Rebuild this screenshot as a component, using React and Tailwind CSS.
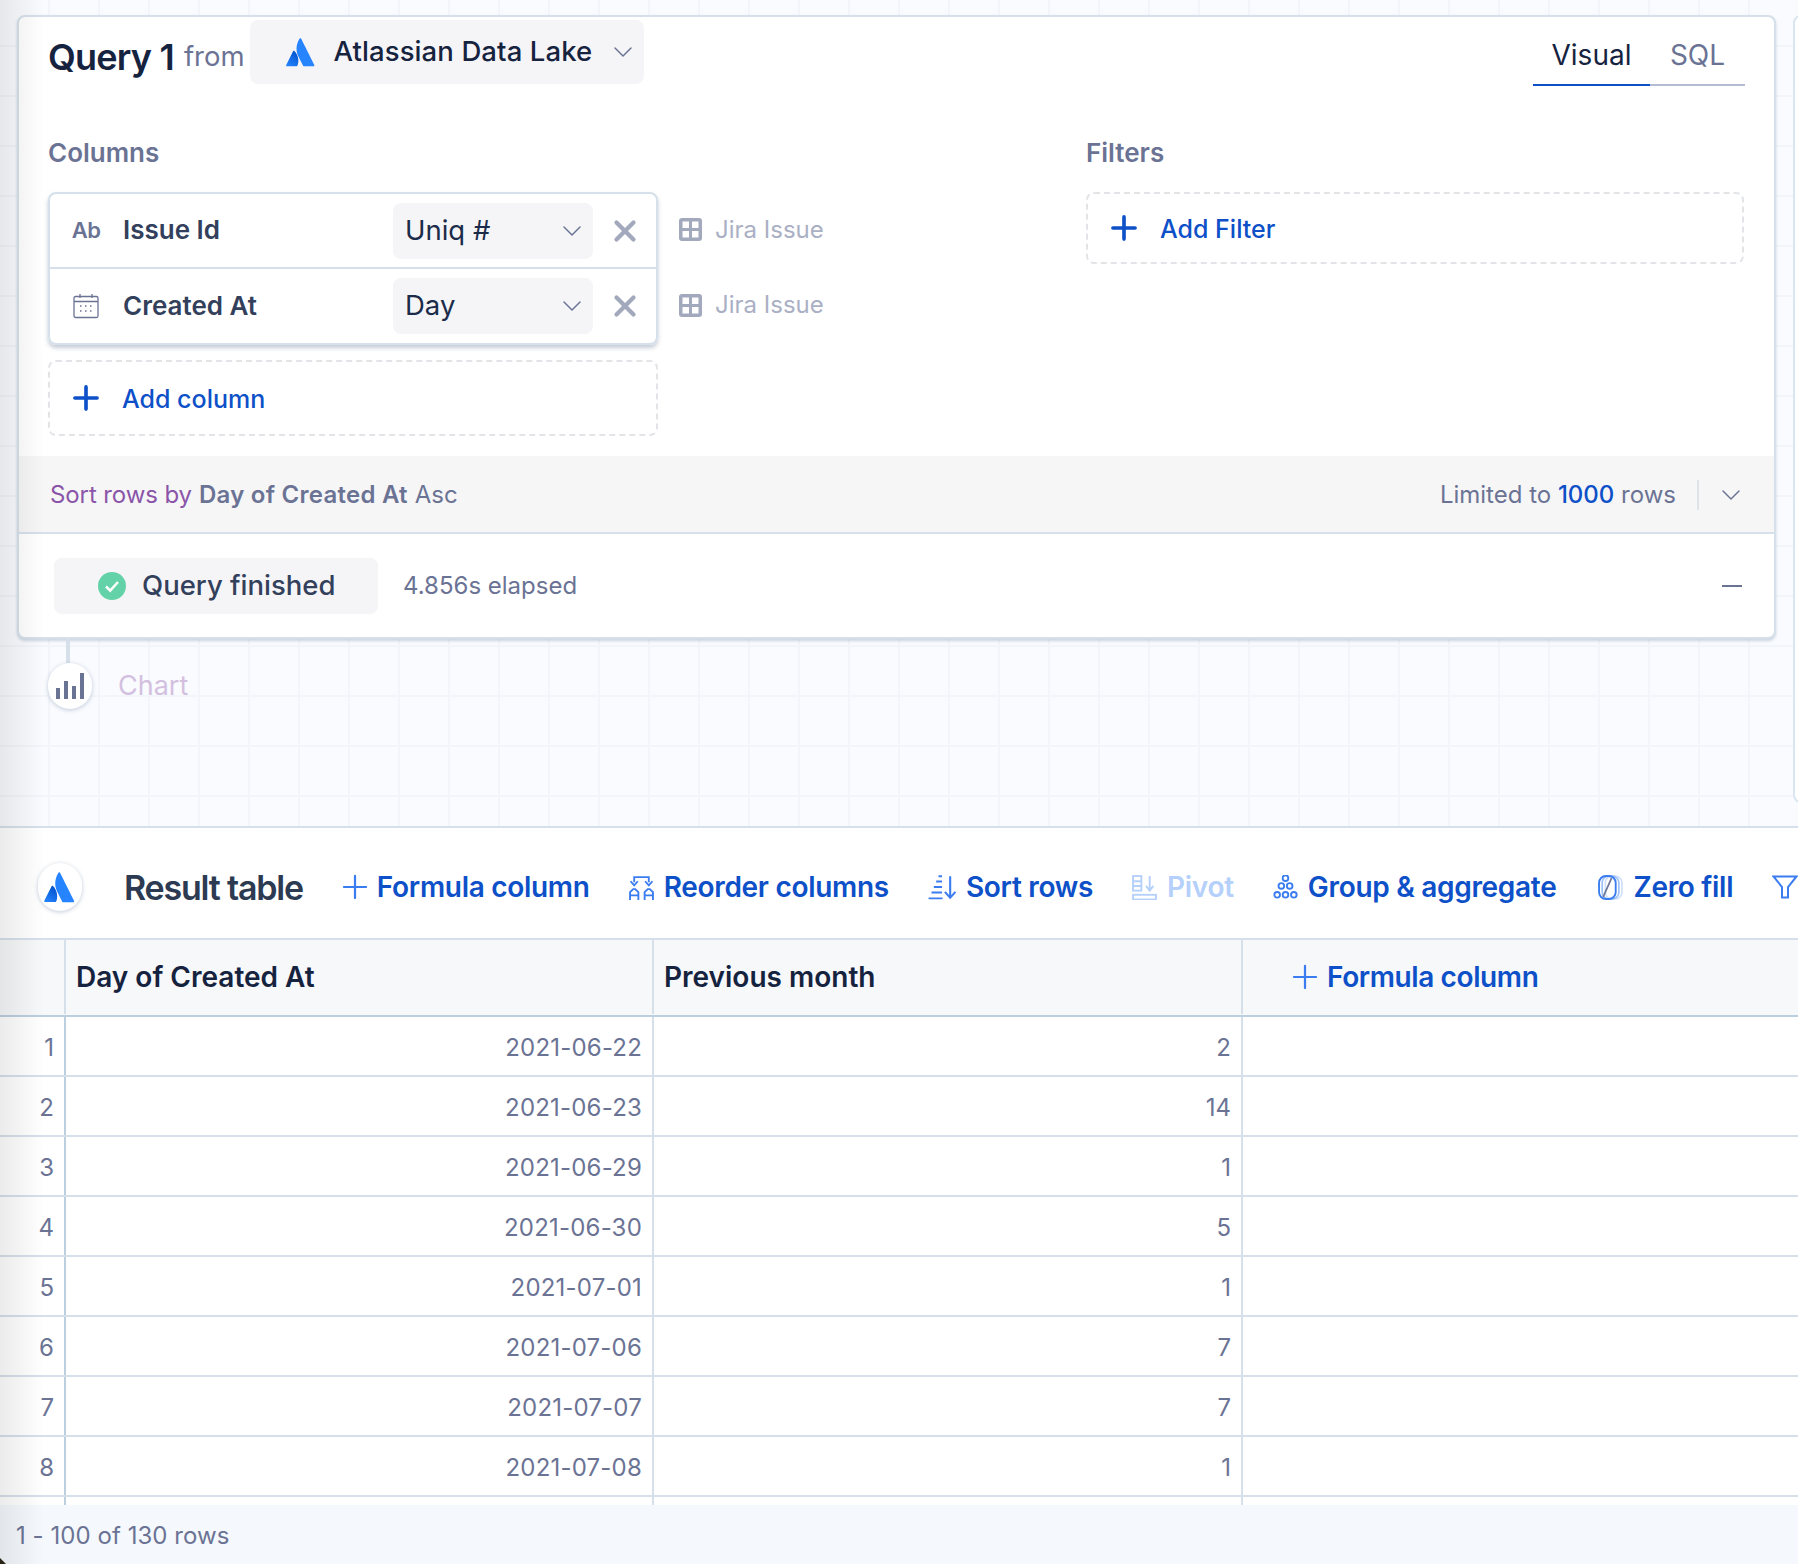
import { ChevronDown, X, Plus } from "lucide-react";

const rows = [
  ["2021-06-22", "2"],
  ["2021-06-23", "14"],
  ["2021-06-29", "1"],
  ["2021-06-30", "5"],
  ["2021-07-01", "1"],
  ["2021-07-06", "7"],
  ["2021-07-07", "7"],
  ["2021-07-08", "1"],
];

function AtlassianLogo({ className }) {
  return (
    <svg viewBox="0 0 32 32" className={className}>
      <defs>
        <linearGradient id="atl" x1="13" y1="17" x2="4" y2="31" gradientUnits="userSpaceOnUse">
          <stop offset="0" stopColor="#0052cc" />
          <stop offset="1" stopColor="#2684ff" />
        </linearGradient>
      </defs>
      <path fill="url(#atl)" d="M9.4 15.1c-.4-.5-1-.4-1.3.1L1.2 28.9c-.3.6.1 1.3.8 1.3h9.6c.3 0 .6-.2.8-.5 2.1-4.3.8-10.9-3-14.6z" />
      <path fill="#2684ff" d="M14.5 2.7c-3.9 6.1-3.6 12.9-1 18.1l4.6 9c.1.3.4.5.8.5h9.6c.7 0 1.1-.7.8-1.3 0 0-12.9-25.8-13.2-26.4-.3-.5-1-.6-1.6.1z" />
    </svg>
  );
}

function TableIcon() {
  return (
    <svg viewBox="0 0 23 23" className="w-[23px] h-[23px] shrink-0">
      <rect x="0" y="0" width="23" height="23" rx="3" fill="#a3a9bc" />
      <rect x="3.500" y="3.500" width="6.500" height="6.500" fill="#fff" />
      <rect x="13" y="3.500" width="6.500" height="6.500" fill="#fff" />
      <rect x="3.500" y="13" width="6.500" height="6.500" fill="#fff" />
      <rect x="13" y="13" width="6.500" height="6.500" fill="#fff" />
    </svg>
  );
}

function CalendarIcon() {
  return (
    <svg viewBox="0 0 26 26" className="w-[26px] h-[26px] shrink-0" fill="none" stroke="#6b7394" strokeWidth="1.3">
      <rect x="1" y="3.5" width="24" height="21" rx="1.5" />
      <path d="M1 8.5h24M7 1v4M19 1v4" />
      <path d="M7 13h1.5M12 13h1.5M17 13h1.5M7 18h1.5M12 18h1.5M17 18h1.5" strokeWidth="1.6" />
    </svg>
  );
}

function ReorderIcon() {
  return (
    <svg viewBox="0 0 24 24" className="w-[25px] h-[25px] shrink-0" fill="none" stroke="#3b7df0" strokeWidth="1.800">
      <path d="M5 7V2h14v5M1.500 6l3.500 4 3.500-4M15.500 6l3.500 4 3.500-4" />
      <path d="M1 24v-7.500l3-3h2l3 3V24M1 19.500h8M15 24v-7.500l3-3h2l3 3V24M15 19.500h8" />
    </svg>
  );
}

function SortIcon() {
  return (
    <svg viewBox="0 0 24 24" className="w-[28px] h-[26px] shrink-0" preserveAspectRatio="none" fill="none" stroke="#3b7df0" strokeWidth="1.800">
      <path d="M9 2h3M7 7h5M5 12h7M3 17h9M0.500 22.500h12" />
      <path d="M19 2v19M14.500 16.500L19 22l4.500-5.500" />
    </svg>
  );
}

function PivotIcon() {
  return (
    <svg viewBox="0 0 24 24" className="w-[25px] h-[25px] shrink-0" fill="none" stroke="#b5d0fa" strokeWidth="1.800">
      <rect x="1" y="1" width="8" height="14" />
      <path d="M1 6h8M1 10.500h8M17 1v13M13.500 10.500L17 15l3.500-4.500" />
      <rect x="1" y="19" width="22" height="4.500" />
    </svg>
  );
}

function GroupIcon() {
  const circles = [[12, 3], [8, 10.5], [16, 10.5], [4, 19], [12, 19], [20, 19]];
  return (
    <svg viewBox="0 0 24 24" className="w-[25px] h-[25px] shrink-0" fill="none" stroke="#3b7df0" strokeWidth="1.800">
      {circles.map(([cx, cy], i) => (
        <circle key={i} cx={cx} cy={cy} r="2.700" />
      ))}
    </svg>
  );
}

function ZeroFillIcon() {
  return (
    <svg viewBox="0 0 24 24" className="w-[25px] h-[25px] shrink-0" fill="none">
      <rect x="7" y="1" width="16" height="22" rx="6.500" stroke="#cfe0fb" strokeWidth="1.600" />
      <rect x="4" y="1" width="16" height="22" rx="6.500" stroke="#9dc0f7" strokeWidth="1.600" />
      <rect x="1" y="1" width="16" height="22" rx="6.500" stroke="#3b7df0" strokeWidth="1.800" />
      <path d="M13 3L5 21" stroke="#6b7394" strokeWidth="1.600" />
    </svg>
  );
}

function FunnelIcon() {
  return (
    <svg viewBox="0 0 26 24" className="w-[26px] h-[24px] shrink-0" fill="none" stroke="#3b7df0" strokeWidth="2">
      <path d="M1.500 1.500h23L16 12v10.500h-6V12z" />
    </svg>
  );
}

function ChartIcon() {
  return (
    <svg viewBox="0 0 28 26" className="w-[28px] h-[26px]" fill="#6b7394">
      <rect x="0" y="15" width="4" height="11" />
      <rect x="8" y="8" width="4" height="18" />
      <rect x="16" y="13" width="4" height="13" />
      <rect x="24" y="0" width="4" height="26" />
    </svg>
  );
}

function ColumnRow({ icon, name, agg, last }) {
  return (
    <div className={`flex items-center pl-[23px] pr-[14px] ${last ? "h-[74px]" : "h-[75px] border-b-2 border-[#d5e0ea]"}`}>
      <div className="w-[26px] flex justify-center shrink-0">{icon}</div>
      <span className="ml-[24px] flex-1 text-[26px] font-semibold text-[#33405c] -mt-[2px]">{name}</span>
      <div className="w-[200px] h-[56px] rounded-lg bg-[#f5f5f7] flex items-center justify-between pl-[12px] pr-[5px] text-[27.500px] text-[#1c2b4a]">
        <span>{agg}</span>
        <ChevronDown className="w-[32px] h-[32px] text-[#6b7394]" strokeWidth={1.1} />
      </div>
      <X className="ml-[15px] w-[34px] h-[34px] text-[#a3a9bc] shrink-0" strokeWidth={3} />
    </div>
  );
}

function JiraTag({ height }) {
  return (
    <div className={`flex items-center gap-[13px] ${height}`}>
      <TableIcon />
      <span className="text-[24px] text-[#aab0c4]">Jira Issue</span>
    </div>
  );
}

function AddBox({ label, height }) {
  return (
    <div className={`flex items-center gap-[17px] pl-[17px] rounded-lg border-2 border-dashed border-[#e2e4e8] text-[25px] font-medium text-[#0d50c8] ${height}`}>
      <Plus className="w-[38px] h-[38px]" strokeWidth={2.3} />
      <span className="pt-[3px]">{label}</span>
    </div>
  );
}

function ToolItem({ icon, label, faded, className = "" }) {
  return (
    <div className={`flex items-center gap-[10px] shrink-0 ${faded ? "text-[#b5d0fa]" : "text-[#0d50c8]"} ${className}`}>
      {icon}
      <span className="text-[28px] font-semibold whitespace-nowrap tracking-[-0.3px]">{label}</span>
    </div>
  );
}

export default function App() {
  return (
    <div className="relative w-[1798px] h-[1564px] overflow-hidden bg-white flex flex-col font-['Inter',sans-serif]">
      {/* Canvas with the query card */}
      <div className="h-[828px] shrink-0 overflow-hidden flex items-start pt-[15px] pl-[17px] border-b-2 border-[#d5e0ea] bg-[#f9fbfe] bg-[linear-gradient(#f2f5f9_2px,transparent_2px),linear-gradient(90deg,#f2f5f9_2px,transparent_2px)] bg-[size:50px_50px] bg-[position:48px_45px]">
        <div className="w-[1759px] shrink-0">
          <div className="h-[624px] bg-white border-2 border-[#d5e0ea] rounded-lg shadow-[0_2px_3px_rgba(120,140,170,0.35)] flex flex-col overflow-hidden">
            <div className="h-[439px] shrink-0 px-[29px]">
              <div className="flex items-start justify-between">
                <div className="flex items-start pt-[3px]">
                  <div className="flex items-baseline mt-[17px]">
                    <span className="text-[36px] leading-[40px] font-semibold tracking-[-0.8px] text-[#16233f]">Query 1</span>
                    <span className="ml-[10px] text-[27.500px] text-[#6b7394] -translate-y-[4px]">from</span>
                  </div>
                  <div className="ml-[5px] w-[394px] h-[64px] rounded-lg bg-[#f5f5f7] flex items-center pl-[35px] pr-[5px]">
                    <AtlassianLogo className="w-[32px] h-[32px] shrink-0" />
                    <span className="ml-[17px] flex-1 text-[27.500px] tracking-[0.1px] font-medium text-[#16233f] whitespace-nowrap">Atlassian Data Lake</span>
                    <ChevronDown className="w-[32px] h-[32px] text-[#6b7394]" strokeWidth={1.1} />
                  </div>
                </div>
                <div className="flex mt-[3px] h-[66px] text-[28px]">
                  <div className="w-[117px] flex items-center justify-center pt-[6px] border-b-2 border-[#0d50c8] text-[#16233f]">Visual</div>
                  <div className="w-[95px] flex items-center justify-center pt-[6px] border-b-2 border-[#b4bcd2] text-[#6b7394]">SQL</div>
                </div>
              </div>
              <div className="flex mt-[51px]">
                <div className="w-[1038px] shrink-0">
                  <div className="text-[26px] leading-[32px] font-semibold text-[#6b7394]">Columns</div>
                  <div className="flex mt-[23px]">
                    <div className="w-[610px] shrink-0">
                      <div className="border-2 border-[#d5e0ea] rounded-lg shadow-[0_3px_4px_rgba(90,110,140,0.35)]">
                        <ColumnRow icon={<span className="text-[22px] font-semibold tracking-[-0.5px] text-[#6b7394]">Ab</span>} name="Issue Id" agg="Uniq #" />
                        <ColumnRow icon={<CalendarIcon />} name="Created At" agg="Day" last />
                      </div>
                      <div className="mt-[15px]">
                        <AddBox label="Add column" height="h-[76px]" />
                      </div>
                    </div>
                    <div className="ml-[21px]">
                      <JiraTag height="h-[75px]" />
                      <JiraTag height="h-[76px]" />
                    </div>
                  </div>
                </div>
                <div className="w-[658px] shrink-0">
                  <div className="text-[26px] leading-[32px] font-semibold text-[#6b7394]">Filters</div>
                  <div className="mt-[23px]">
                    <AddBox label="Add Filter" height="h-[72px]" />
                  </div>
                </div>
              </div>
            </div>
            <div className="h-[78px] shrink-0 bg-[#f6f6f7] border-b-2 border-[#d5e0ea] flex items-center pl-[31px] pt-[1px] text-[24px] text-[#6b7394]">
              <span className="text-[#8a55a8] tracking-[-0.1px]">Sort rows by</span>
              <span className="ml-[7px] font-semibold tracking-[0.25px]">Day of Created At</span>
              <span className="ml-[7px]">Asc</span>
              <span className="ml-auto">Limited to <span className="text-[#0d50c8] font-medium">1000</span> rows</span>
              <div className="ml-[21px] w-[2px] h-[30px] bg-[#dfe2e8]" />
              <ChevronDown className="ml-[16px] mr-[27px] w-[32px] h-[32px] text-[#6b7394]" strokeWidth={1.1} />
            </div>
            <div className="flex-1 flex items-center pl-[35px] pt-[1px]">
              <div className="w-[324px] h-[56px] rounded-lg bg-[#f5f5f7] flex items-center pl-[44px] gap-[16px]">
                <svg viewBox="0 0 28 28" className="w-[28px] h-[28px] shrink-0">
                  <circle cx="14" cy="14" r="14" fill="#64d2a8" />
                  <path d="M8 14.500l4.200 4.200L20 10" fill="none" stroke="#fff" strokeWidth="2.500" />
                </svg>
                <span className="text-[27.500px] font-medium text-[#33405c]">Query finished</span>
              </div>
              <span className="ml-[25px] text-[24px] text-[#6b7394]">4.856s elapsed</span>
              <div className="ml-auto mr-[32px] w-[20px] h-[2px] bg-[#6b7394]" />
            </div>
          </div>
          {/* Next step in the pipeline */}
          <div className="ml-[31px]">
            <div className="ml-[18px] w-[4px] h-[24px] bg-[#d5e0ea]" />
            <div className="flex items-center">
              <div className="w-[44px] h-[46px] rounded-full bg-white shadow-[0_1px_4px_rgba(120,140,170,0.45)] flex items-center justify-center">
                <ChartIcon />
              </div>
              <span className="ml-[26px] text-[27px] text-[#d3c0e0]">Chart</span>
            </div>
          </div>
        </div>
        <div className="ml-[17px] w-[20px] h-[788px] shrink-0 bg-white border-2 border-[#d9e5ef] rounded-lg" />
      </div>

      {/* Result table */}
      <div className="h-[110px] shrink-0 flex items-center pl-[38px] pt-[8px] overflow-hidden">
        <div className="w-[44px] h-[48px] rounded-full bg-white shadow-[0_1px_4px_rgba(120,140,170,0.45)] flex items-center justify-center shrink-0">
          <AtlassianLogo className="w-[34px] h-[34px]" />
        </div>
        <span className="ml-[42px] text-[34px] font-semibold tracking-[-1.2px] text-[#2c3a52] whitespace-nowrap">Result table</span>
        <div className="ml-[40px] flex items-center gap-[39px]">
          <ToolItem icon={<Plus className="w-[38px] h-[38px] -mx-[7px] text-[#3b7df0]" strokeWidth={1.4} />} label="Formula column" />
          <ToolItem icon={<ReorderIcon />} label="Reorder columns" />
          <ToolItem icon={<SortIcon />} label="Sort rows" />
          <ToolItem icon={<PivotIcon />} label="Pivot" faded />
          <ToolItem icon={<GroupIcon />} label="Group & aggregate" />
          <ToolItem icon={<ZeroFillIcon />} label="Zero fill" className="ml-[3px]" />
          <FunnelIcon />
        </div>
      </div>

      <div className="h-[567px] shrink-0 overflow-hidden">
        <div className="grid grid-cols-[66px_588px_589px_1fr] h-[79px] pb-[1px] bg-[#f7f8fa] border-t-2 border-b-2 border-t-[#d5e0ea] border-b-[#bccfdf] text-[28px] font-semibold text-[#16233f]">
          <div className="border-r-2 border-[#d5e0ea]" />
          <div className="flex items-center pl-[10px] border-r-2 border-[#d5e0ea]">Day of Created At</div>
          <div className="flex items-center pl-[10px] border-r-2 border-[#d5e0ea]">Previous month</div>
          <div className="flex items-center pl-[43px] text-[#0d50c8] tracking-[-0.4px]">
            <Plus className="w-[38px] h-[38px] text-[#3b7df0] mr-[3px]" strokeWidth={1.4} />
            <span>Formula column</span>
          </div>
        </div>
        {rows.map(([day, count], i) => (
          <div key={i} className="grid grid-cols-[66px_588px_589px_1fr] h-[60px] border-b-2 border-[#d5e0ea] text-[24px] text-[#6b7394]">
            <div className="flex items-center justify-end pt-[4px] pr-[10px] border-r-2 border-[#bccfdf]">{i + 1}</div>
            <div className="flex items-center justify-end pt-[4px] pr-[10px] tracking-[0.2px] border-r-2 border-[#d5e0ea]">{day}</div>
            <div className="flex items-center justify-end pt-[4px] pr-[10px] border-r-2 border-[#d5e0ea]">{count}</div>
            <div />
          </div>
        ))}
        {/* the next row is cut off by the footer */}
        <div className="grid grid-cols-[66px_588px_589px_1fr] h-[60px]">
          <div className="border-r-2 border-[#bccfdf]" />
          <div className="border-r-2 border-[#d5e0ea]" />
          <div className="border-r-2 border-[#d5e0ea]" />
          <div />
        </div>
      </div>

      <div className="flex-1 bg-[#f5f9fd] flex items-center pl-[16px] pt-[3px] text-[24px] tracking-[0.05px] text-[#6b7394]">1 - 100 of 130 rows</div>

      {/* Shadow from the sidebar, lying over the whole page */}
      <div className="absolute inset-y-0 left-0 w-[44px] pointer-events-none bg-gradient-to-r from-[#00000014] to-transparent" />
      {/* Window corner */}
      <svg viewBox="0 0 6 6" className="absolute left-0 bottom-0 w-[6px] h-[6px]">
        <path d="M0 0L6 6H0z" fill="#2a2416" />
      </svg>
    </div>
  );
}
